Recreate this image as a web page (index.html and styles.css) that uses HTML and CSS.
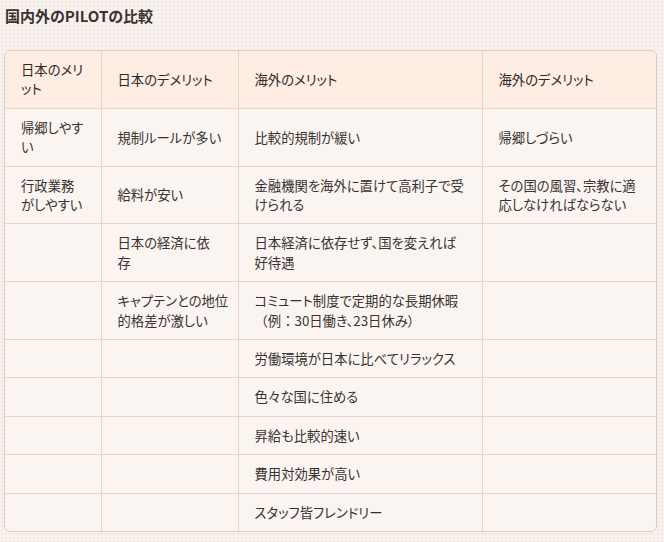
FILE: index.html
```html
<!DOCTYPE html>
<html lang="ja">
<head>
<meta charset="utf-8">
<link rel="stylesheet" href="styles.css">
</head>
<body>
<h3 class="title">国内外の<b class="en">PILOT</b>の比較</h3>
<div class="wrap">
<table class="cmp">
<colgroup><col class="c1"><col class="c2"><col class="c3"><col class="c4"></colgroup>
<thead>
<tr><th>日本のメリット</th><th>日本のデメリット</th><th>海外のメリット</th><th>海外のデメリット</th></tr>
</thead>
<tbody>
<tr><td>帰郷しやすい</td><td>規制ルールが多い</td><td>比較的規制が緩い</td><td>帰郷しづらい</td></tr>
<tr><td>行政業務がしやすい</td><td>給料が安い</td><td>金融機関を海外に置けて高利子で受けられる</td><td>その国の風習、宗教に適応しなければならない</td></tr>
<tr><td></td><td>日本の経済に依存</td><td>日本経済に依存せず、国を変えれば好待遇</td><td></td></tr>
<tr><td></td><td><span class="nw">キャプテンとの地位</span>的格差が激しい</td><td>コミュート制度で定期的な長期休暇<span class="fw">（例：</span>30日働き、23日休み）</td><td></td></tr>
<tr><td></td><td></td><td>労働環境が日本に比べてリラックス</td><td></td></tr>
<tr><td></td><td></td><td>色々な国に住める</td><td></td></tr>
<tr><td></td><td></td><td>昇給も比較的速い</td><td></td></tr>
<tr><td></td><td></td><td>費用対効果が高い</td><td></td></tr>
<tr><td></td><td></td><td>スタッフ皆フレンドリー</td><td></td></tr>
</tbody>
</table>
</div>
</body>
</html>
```
FILE: styles.css
```css
html, body {
  margin: 0;
  padding: 0;
}
body {
  width: 664px;
  height: 542px;
  overflow: hidden;
  background-color: #f9f3ef;
  background-image: radial-gradient(circle, #ece0da 0.6px, transparent 0.9px);
  background-size: 4px 4px;
  font-family: "Noto Sans CJK JP", "Noto Sans", sans-serif;
  font-feature-settings: "palt";
  color: #333;
  padding: 5px 7px 0 4px;
  box-sizing: border-box;
}
.title {
  margin: 0 0 0 1px;
  font-size: 15px;
  line-height: 21px;
  font-weight: bold;
  color: #3a3230;
}
.en {
  font-weight: bold;
}
.wrap {
  margin-top: 24px;
  border: 1px solid #dccbc2;
  border-radius: 6px;
  overflow: hidden;
  background: #fbf5f1;
}
.cmp {
  width: 100%;
  border-collapse: collapse;
  table-layout: fixed;
  font-size: 13.33px;
  line-height: 19.4px;
}
.fw {
  font-feature-settings: normal;
}
.nw {
  white-space: nowrap;
}
.c1 { width: 96px; }
.c2 { width: 137px; }
.c3 { width: 244px; }
.c4 { width: auto; }
.cmp th, .cmp td {
  border: 1px solid #ead3c6;
  padding: 9px 15px 9px 16px;
  text-align: left;
  vertical-align: middle;
  color: #383230;
}
.cmp th {
  background: #fdede2;
  font-weight: 400;
  color: #2e2826;
  height: 38px;
}
.cmp tr > :first-child { border-left: none; }
.cmp tr > :last-child { border-right: none; }
.cmp thead tr th { border-top: none; }
.cmp tbody tr:last-child td { border-bottom: none; }
.cmp td {
  height: 19.4px;
}
```
